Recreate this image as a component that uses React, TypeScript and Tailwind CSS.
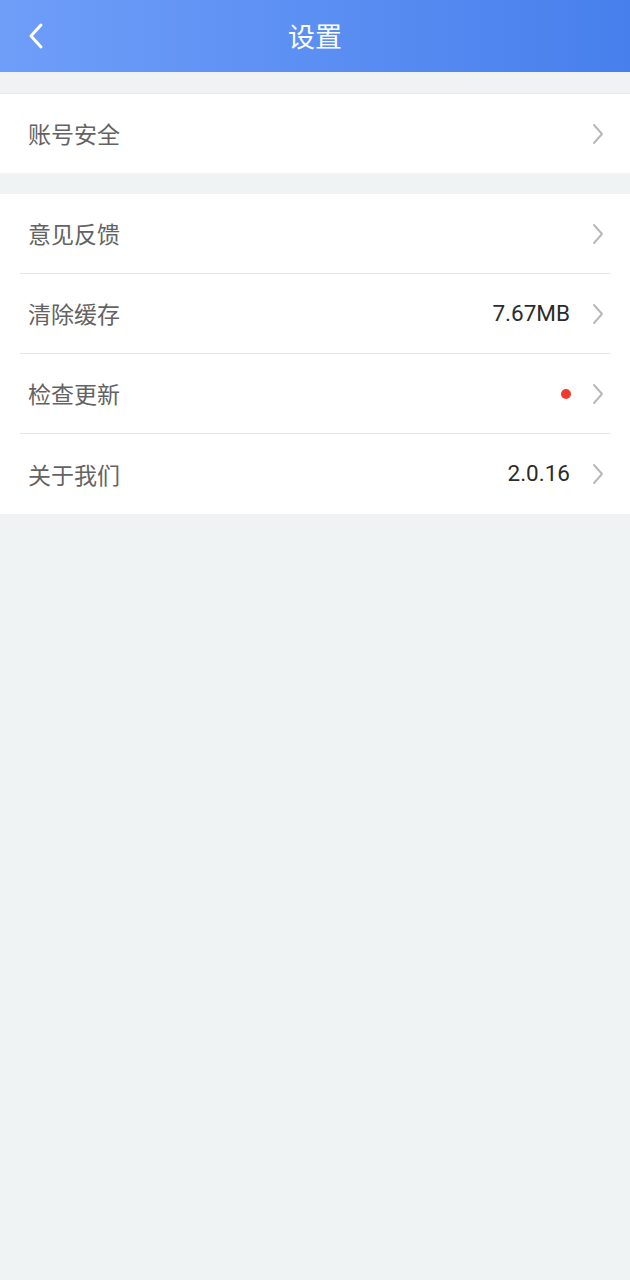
import type { ReactNode } from 'react'

const font = { fontFamily: '"Noto Sans CJK SC", Roboto, "Noto Sans", sans-serif' }
const num = { fontFamily: 'Roboto, "Noto Sans", sans-serif' }

function Chevron() {
  return (
    <svg width="14" height="22" viewBox="0 0 14 22" className="shrink-0">
      <path d="M3 2 L11 11 L3 20" fill="none" stroke="#b8b8b8" strokeWidth="2" strokeLinecap="round" strokeLinejoin="round" />
    </svg>
  )
}

function Row({ label, right, last }: { label: string; right?: ReactNode; last?: boolean }) {
  return (
    <div className="px-5">
      <div className={`flex items-center h-[80px] pl-2 pr-[5px] ${last ? '' : 'border-b border-[#e6e6e6]'}`}>
        <span className="flex-1 text-[23px] text-[#636363]">{label}</span>
        {right && <span className="mr-[21px] flex items-center">{right}</span>}
        <Chevron />
      </div>
    </div>
  )
}

export default function App() {
  return (
    <div className="min-h-[1280px] bg-[#f0f3f4]" style={font}>
      <header className="relative h-[72px] flex items-center justify-center bg-gradient-to-r from-[#6f9ef9] to-[#477fec]">
        <button className="absolute left-[26px] top-[22px] p-0">
          <svg width="20" height="28" viewBox="0 0 20 28">
            <path d="M15 3 L5 14 L15 25" fill="none" stroke="#fff" strokeWidth="3" strokeLinecap="round" strokeLinejoin="round" />
          </svg>
        </button>
        <h1 className="text-[27px] text-white">设置</h1>
      </header>

      <div className="h-[21px]" />
      <section className="bg-white border-t border-[#e8eaec]">
        <div className="h-[79px] flex items-center pl-[28px] pr-[25px]">
          <span className="flex-1 text-[23px] text-[#636363]">账号安全</span>
          <Chevron />
        </div>
      </section>

      <div className="h-[21px]" />
      <section className="bg-white">
        <Row label="意见反馈" />
        <Row label="清除缓存" right={<span className="text-[22.5px] text-[#2b2b2b]" style={num}>7.67MB</span>} />
        <Row label="检查更新" right={<span className="w-[10px] h-[10px] rounded-full bg-[#f03a2e] mr-[-1px]" />} />
        <Row label="关于我们" right={<span className="text-[22.5px] text-[#2b2b2b]" style={num}>2.0.16</span>} last />
      </section>
    </div>
  )
}
